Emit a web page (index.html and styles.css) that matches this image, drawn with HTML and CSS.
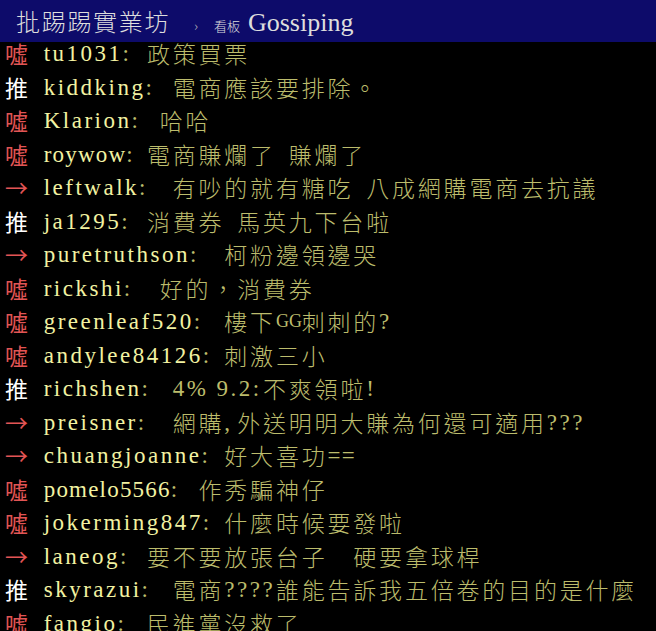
FILE: index.html
```html
<!DOCTYPE html>
<html lang="zh-Hant">
<head>
    <meta charset="UTF-8">
    <meta name="viewport" content="width=device-width, initial-scale=1.0">
    <title>看板 Gossiping - 批踢踢實業坊</title>
    <link rel="stylesheet" href="styles.css">
</head>
<body>

<div class="topbar">
    <a class="site" href="#">批踢踢實業坊</a>
    <span class="sep">›</span>
    <span class="board-label">看板</span>
    <a class="board" href="#">Gossiping</a>
</div>

<div class="main">
    <div class="push"><span class="tag boo">噓</span><span class="user en w8">tu1031<span class="colon">: </span></span><span class="content">政策買票</span></div>
    <div class="push"><span class="tag up">推</span><span class="user en w10">kiddking<span class="colon">: </span></span><span class="content">電商應該要排除。</span></div>
    <div class="push"><span class="tag boo">噓</span><span class="user en w9">Klarion<span class="colon">: </span></span><span class="content">哈哈</span></div>
    <div class="push"><span class="tag boo">噓</span><span class="user en w8 tight">roywow<span class="colon">: </span></span><span class="content">電商賺爛了<span class="en w1"> </span>賺爛了</span></div>
    <div class="push"><span class="tag arrow">→</span><span class="user en w10">leftwalk<span class="colon">: </span></span><span class="content">有吵的就有糖吃<span class="en w1"> </span>八成網購電商去抗議</span></div>
    <div class="push"><span class="tag up">推</span><span class="user en w8">ja1295<span class="colon">: </span></span><span class="content">消費券<span class="en w1"> </span>馬英九下台啦</span></div>
    <div class="push"><span class="tag arrow">→</span><span class="user en w14">puretruthson<span class="colon">: </span></span><span class="content">柯粉邊領邊哭</span></div>
    <div class="push"><span class="tag boo">噓</span><span class="user en w9">rickshi<span class="colon">: </span></span><span class="content">好的，消費券</span></div>
    <div class="push"><span class="tag boo">噓</span><span class="user en w14">greenleaf520<span class="colon">: </span></span><span class="content">樓下<span class="en w2 narrow">GG</span>刺刺的<span class="en w1">?</span></span></div>
    <div class="push"><span class="tag boo">噓</span><span class="user en w14">andylee84126<span class="colon">: </span></span><span class="content">刺激三小</span></div>
    <div class="push"><span class="tag up">推</span><span class="user en w10">richshen<span class="colon">: </span></span><span class="content"><span class="en w7">4% 9.2:</span>不爽領啦<span class="en w1">!</span></span></div>
    <div class="push"><span class="tag arrow">→</span><span class="user en w10">preisner<span class="colon">: </span></span><span class="content">網購<span class="en w1">,</span>外送明明大賺為何還可適用<span class="en w3">???</span></span></div>
    <div class="push"><span class="tag arrow">→</span><span class="user en w14">chuangjoanne<span class="colon">: </span></span><span class="content">好大喜功<span class="en w2 tight">==</span></span></div>
    <div class="push"><span class="tag boo">噓</span><span class="user en w12 tight">pomelo5566<span class="colon">: </span></span><span class="content">作秀騙神仔</span></div>
    <div class="push"><span class="tag boo">噓</span><span class="user en w14">jokerming847<span class="colon">: </span></span><span class="content">什麼時候要發啦</span></div>
    <div class="push"><span class="tag arrow">→</span><span class="user en w8">laneog<span class="colon">: </span></span><span class="content">要不要放張台子<span class="en w2">  </span>硬要拿球桿</span></div>
    <div class="push"><span class="tag up">推</span><span class="user en w10">skyrazui<span class="colon">: </span></span><span class="content">電商<span class="en w4">????</span>誰能告訴我五倍卷的目的是什麼</span></div>
    <div class="push"><span class="tag boo">噓</span><span class="user en w8">fangio<span class="colon">: </span></span><span class="content">民進黨沒救了</span></div>
</div>

</body>
</html>
```

FILE: styles.css
```css
body {
    margin: 0;
    padding: 0;
    background-color: #000;
    font-family: "Noto Sans CJK TC", sans-serif;
    font-size: 23px;
    font-weight: 300;
    letter-spacing: 2.8px;
    overflow: hidden;
}
/* half-width cells, 12.9px each like the BBS grid */
.en {
    display: inline-block;
    font-family: "Liberation Serif", "Noto Sans CJK TC", serif;
    font-size: 23px;
    font-weight: normal;
    letter-spacing: 2.5px;
    white-space: pre;
    vertical-align: top;
}
.en.tight {
    letter-spacing: 1.2px;
}
.en.narrow {
    font-size: 18px;
    letter-spacing: 0;
}
.w1 { width: 12.9px; }
.w2 { width: 25.8px; }
.w3 { width: 38.7px; }
.w4 { width: 51.6px; }
.w7 { width: 90.3px; }
.w8 { width: 103.2px; }
.w9 { width: 116.1px; }
.w10 { width: 129px; }
.w12 { width: 154.8px; }
.w14 { width: 180.6px; }
.topbar {
    height: 42px;
    line-height: 42px;
    background-color: #0d0b6a;
    padding-left: 16px;
    white-space: nowrap;
    color: #ddd;
}
.topbar a {
    color: #ddd;
    text-decoration: none;
}
.topbar .site {
    font-size: 24px;
    letter-spacing: 1.7px;
}
.topbar .sep {
    font-size: 14px;
    letter-spacing: 0;
    color: #bbb;
    margin: 0 8px 0 16px;
}
.topbar .board-label {
    font-size: 13px;
    letter-spacing: 0;
}
.topbar .board {
    font-family: "Liberation Serif", serif;
    font-size: 26px;
    font-weight: normal;
    letter-spacing: 0;
}
.main {
    margin-top: -5px;
    padding-left: 5px;
}
.push {
    height: 33.5px;
    line-height: 33.5px;
    white-space: pre;
    overflow: hidden;
}
.tag {
    display: inline-block;
    width: 38.7px;
    font-weight: normal;
    vertical-align: top;
}
.tag.up {
    color: #fff;
}
.tag.boo,
.tag.arrow {
    color: #e25555;
}
.user {
    color: #f2f2a2;
}
.colon,
.content {
    color: #bcbc6c;
}
```
